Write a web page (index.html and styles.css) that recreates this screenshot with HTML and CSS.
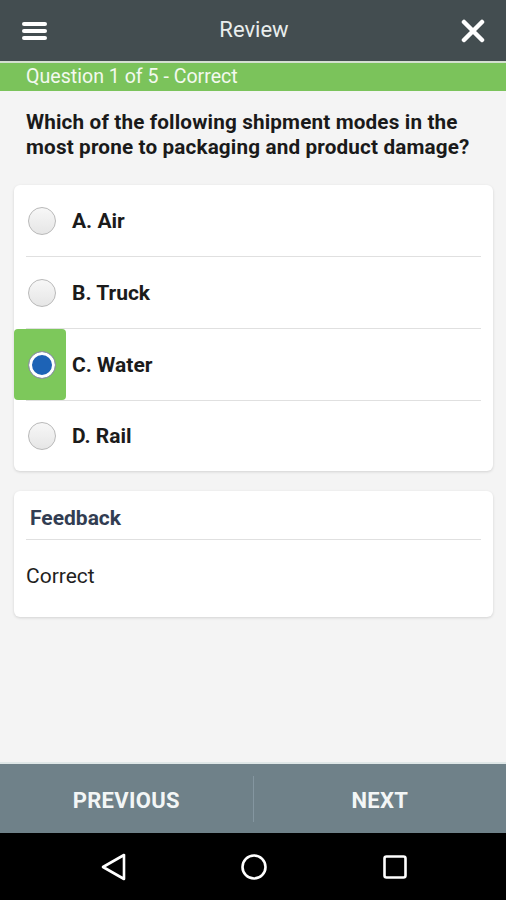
FILE: index.html
```html
<!DOCTYPE html>
<html lang="en">

<head>
    <meta charset="UTF-8">
    <meta name="viewport" content="width=device-width, initial-scale=1">
    <title>Review</title>
    <link rel="stylesheet" href="styles.css">
</head>

<body>
    <header class="topbar">
        <div class="menu-icon">
            <span></span><span></span><span></span>
        </div>
        <h1>Review</h1>
        <svg class="close-icon" width="24" height="24" viewBox="0 0 24 24">
            <path d="M3 3 L21 21 M21 3 L3 21" stroke="#fff" stroke-width="4.5" stroke-linecap="round" />
        </svg>
    </header>

    <div class="status">Question 1 of 5 - Correct</div>

    <main class="content">
        <p class="question">Which of the following shipment modes in the most prone to packaging and product damage?</p>

        <div class="card answers">
            <div class="option">
                <div class="mark"><span class="radio"></span></div>
                <span class="label">A. Air</span>
            </div>
            <div class="sep"></div>
            <div class="option">
                <div class="mark"><span class="radio"></span></div>
                <span class="label">B. Truck</span>
            </div>
            <div class="sep"></div>
            <div class="option">
                <div class="mark correct"><span class="radio checked"></span></div>
                <span class="label">C. Water</span>
            </div>
            <div class="sep"></div>
            <div class="option last">
                <div class="mark"><span class="radio"></span></div>
                <span class="label">D. Rail</span>
            </div>
        </div>

        <div class="card feedback">
            <div class="feedback-title">Feedback</div>
            <div class="feedback-body">Correct</div>
        </div>
    </main>

    <footer class="pager">
        <button class="pager-btn">PREVIOUS</button>
        <div class="pager-sep"></div>
        <button class="pager-btn">NEXT</button>
    </footer>

    <nav class="navbar">
        <svg width="28" height="30" viewBox="0 0 28 30">
            <path d="M25 3 L25 27 L4 15 Z" fill="none" stroke="#fff" stroke-width="2.6" stroke-linejoin="round" />
        </svg>
        <svg width="28" height="28" viewBox="0 0 28 28">
            <circle cx="14" cy="14" r="11.5" fill="none" stroke="#fff" stroke-width="2.6" />
        </svg>
        <svg width="26" height="26" viewBox="0 0 26 26">
            <rect x="2.5" y="2.5" width="21" height="21" rx="2" fill="none" stroke="#fff" stroke-width="2.6" />
        </svg>
    </nav>
</body>

</html>
```

FILE: styles.css
```css
* {
    box-sizing: border-box;
}

body {
    margin: 0;
    height: 100vh;
    display: flex;
    flex-direction: column;
    font-family: 'Roboto', 'Liberation Sans', sans-serif;
    background-color: #f4f4f4;
    color: #1b1b1b;
}

/* Top bar */
.topbar {
    height: 63px;
    flex-shrink: 0;
    display: flex;
    align-items: center;
    justify-content: space-between;
    padding: 0 21px 2px 22px;
    background-color: #434d50;
    border-bottom: 2px solid #d4dfd0;
}

.topbar h1 {
    margin: 0;
    font-size: 22px;
    font-weight: 400;
    color: #e9eded;
}

.menu-icon {
    width: 25px;
    display: flex;
    flex-direction: column;
    gap: 3px;
    margin-top: 2px;
}

.menu-icon span {
    height: 4px;
    border-radius: 2px;
    background-color: #fff;
}

.close-icon {
    margin-top: 2px;
}

.status {
    height: 28px;
    flex-shrink: 0;
    padding-left: 26px;
    line-height: 28px;
    font-size: 19.6px;
    color: #f3f9ef;
    background-color: #7bc35b;
}

/* Question area */
.content {
    flex: 1;
    padding: 0 13px 0 14px;
}

.question {
    margin: 19px 12px 25px 12px;
    font-size: 20.7px;
    line-height: 25px;
    font-weight: 700;
    letter-spacing: 0.15px;
    color: #1a1a1a;
}

.card {
    background-color: #fff;
    border-radius: 6px;
    box-shadow: 0 1px 3px rgba(0, 0, 0, 0.14);
}

.option {
    height: 71px;
    display: flex;
    align-items: center;
}

.option.last {
    height: 70px;
}

.mark {
    width: 52px;
    height: 100%;
    display: flex;
    align-items: center;
    justify-content: flex-end;
    padding-right: 10px;
    border-radius: 4px;
}

.mark.correct {
    background-color: #7dc85b;
}

.radio {
    width: 28px;
    height: 28px;
    border-radius: 50%;
    border: 1.5px solid #b9b9b9;
    background: linear-gradient(#f7f7f7, #e6e6e6);
}

.radio.checked {
    border: 1.5px solid #9a9a9a;
    background: #1d63b6;
    box-shadow: inset 0 0 0 3px #fff;
}

.label {
    margin-left: 6px;
    font-size: 21px;
    font-weight: 700;
    color: #1b1b1b;
}

.sep {
    height: 1px;
    margin: 0 12px;
    background-color: #e0e0e0;
}

/* Feedback */
.feedback {
    margin-top: 20px;
    padding: 0 12px;
}

.feedback-title {
    padding: 15px 4px 9px;
    line-height: 24px;
    font-size: 21px;
    font-weight: 700;
    color: #323d52;
    border-bottom: 1px solid #e0e0e0;
}

.feedback-body {
    padding: 24px 0 29px;
    line-height: 24px;
    font-size: 21px;
    color: #1f1f1f;
}

/* Pager */
.pager {
    height: 71px;
    flex-shrink: 0;
    display: flex;
    align-items: center;
    background-color: #6f8189;
    border-top: 2px solid #dfe7e7;
}

.pager-btn {
    flex: 1;
    height: 100%;
    border: none;
    background: transparent;
    font-family: inherit;
    font-size: 22px;
    font-weight: 700;
    letter-spacing: 0.3px;
    color: #f3f6f6;
    padding: 3px 0 0;
}

.pager-sep {
    width: 1px;
    height: 46px;
    background-color: #8496a0;
}

/* Android nav */
.navbar {
    height: 67px;
    flex-shrink: 0;
    display: grid;
    grid-template-columns: 1fr 1fr 1fr;
    justify-items: center;
    align-items: center;
    padding: 0 41px 0 42px;
    background-color: #000;
}
```
